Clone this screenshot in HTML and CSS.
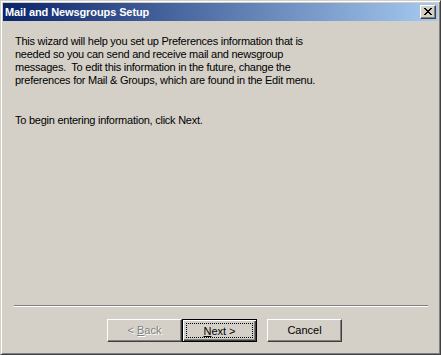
FILE: index.html
```html
<!DOCTYPE html>
<html>
<head>
<meta charset="utf-8">
<link rel="stylesheet" href="styles.css">
</head>
<body>
<div class="window">
  <div class="titlebar">
    <span class="title">Mail and Newsgroups Setup</span>
    <span class="close">
      <svg width="8" height="7" viewBox="0 0 8 7"><path d="M0 0h2v1h1v1h2V1h1V0h2v1H7v1H6v1H5v1h1v1h1v1h1v1H6V6H5V5H3v1H2v1H0V6h1V5h1V4h1V3H2V2H1V1H0z" fill="#000"/></svg>
    </span>
  </div>
  <div class="content">
    <p class="para">This wizard will help you set up Preferences information that is<br>needed so you can send and receive mail and newsgroup<br>messages.&nbsp; To edit this information in the future, change the<br>preferences for Mail &amp; Groups, which are found in the Edit menu.</p>
    <p class="para next-para">To begin entering information, click Next.</p>
  </div>
  <div class="separator"></div>
  <div class="buttons">
    <div class="btn disabled"><span>&lt; <u>B</u>ack</span></div>
    <div class="btn default"><span class="focus"><span><u>N</u>ext &gt;</span></span></div>
    <div class="btn cancel"><span>Cancel</span></div>
  </div>
</div>
</body>
</html>
```
FILE: styles.css
```css
html, body {
  margin: 0;
  padding: 0;
  background: #d4d0c8;
}
.window {
  width: 441px;
  height: 355px;
  box-sizing: border-box;
  border: 1px solid;
  border-color: #d4d0c8 #404040 #404040 #d4d0c8;
  box-shadow: inset 1px 1px #ffffff, inset -1px -1px #808080;
  padding: 2px;
  background: #d4d0c8;
  display: flex;
  flex-direction: column;
  font-family: "Liberation Sans", Arial, sans-serif;
  font-size: 11px;
  color: #000;
}
.titlebar {
  height: 18px;
  flex: none;
  display: flex;
  align-items: center;
  justify-content: space-between;
  padding: 0 2px 0 2px;
  background: linear-gradient(to right, #0a246a, #a6caf0);
}
.title {
  color: #fff;
  font-family: "Liberation Sans", Arial, sans-serif;
  font-weight: bold;
  font-size: 11px;
  letter-spacing: -0.1px;
}
.close {
  width: 16px;
  height: 14px;
  box-sizing: border-box;
  border: 1px solid;
  border-color: #ffffff #404040 #404040 #ffffff;
  box-shadow: inset -1px -1px #808080;
  background: #d4d0c8;
  display: flex;
  align-items: center;
  justify-content: center;
}
.close svg {
  display: block;
  margin-left: -1px;
  margin-top: -1px;
}
.content {
  flex: 1;
  padding: 14px 0 0 12px;
}
.para {
  margin: 0;
  line-height: 13px;
  white-space: nowrap;
  letter-spacing: -0.25px;
}
.next-para {
  margin-top: 27px;
}
.separator {
  flex: none;
  margin: 0 10px 0 11px;
  border-top: 1px solid #808080;
  border-bottom: 1px solid #ffffff;
  height: 0;
}
.buttons {
  flex: none;
  display: flex;
  justify-content: flex-end;
  padding: 12px 96px 10px 0;
}
.btn {
  width: 75px;
  height: 23px;
  box-sizing: border-box;
  border: 1px solid;
  border-color: #ffffff #404040 #404040 #ffffff;
  box-shadow: inset -1px -1px #808080;
  display: flex;
  align-items: center;
  justify-content: center;
  padding-bottom: 1px;
}
.disabled {
  color: #808080;
  text-shadow: 1px 1px #ffffff;
}
.default {
  border: 1px solid #000;
  box-shadow: inset 1px 1px #ffffff, inset -1px -1px #404040, inset -2px -2px #808080;
  padding: 3px;
}
.focus {
  flex: 1;
  align-self: stretch;
  border: 1px dotted #000;
  display: flex;
  align-items: center;
  justify-content: center;
}
.cancel {
  margin-left: 10px;
}
```
